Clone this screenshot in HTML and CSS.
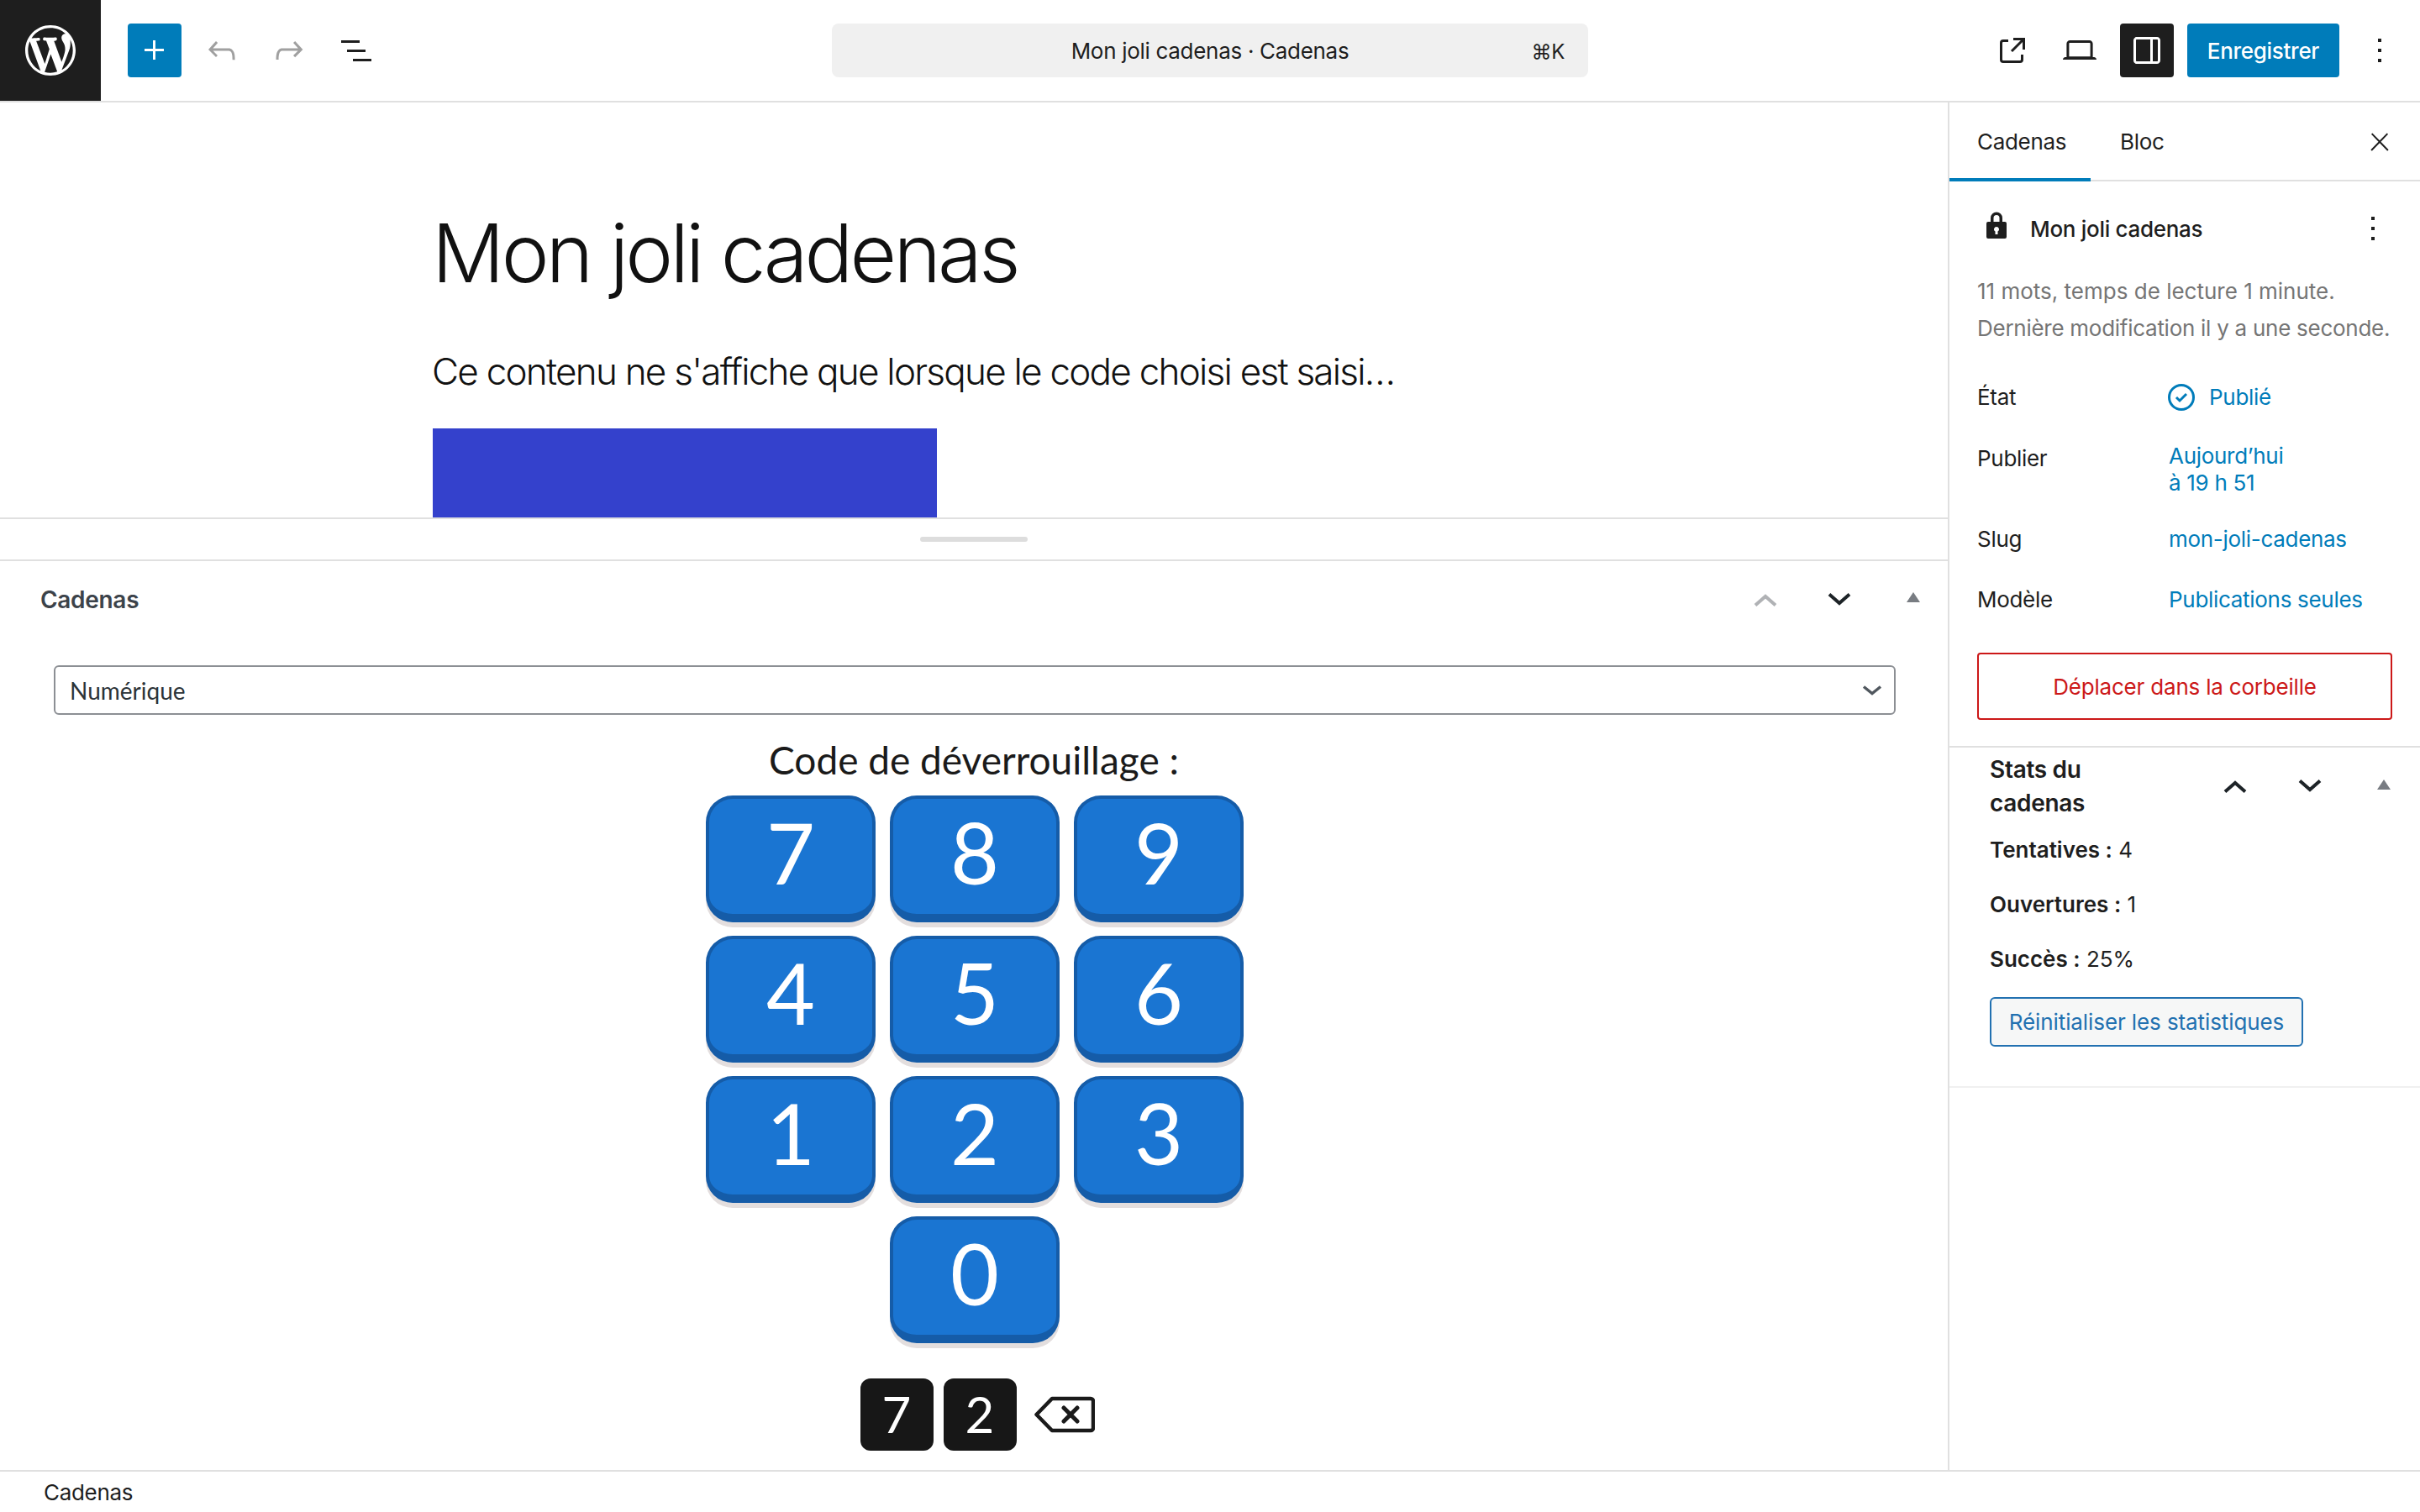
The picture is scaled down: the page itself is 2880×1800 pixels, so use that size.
FILE: index.html
```html
<!DOCTYPE html>
<html lang="fr">
<head>
<meta charset="utf-8">
<title>Mon joli cadenas</title>
<link rel="stylesheet" href="styles.css">
</head>
<body>
<div class="app">
  <header class="topbar">
    <div class="tb-left">
      <div class="logo"><svg width="60" height="60" viewBox="0 0 20 20" fill="#fff"><path d="M20 10c0-5.51-4.49-10-10-10C4.48 0 0 4.49 0 10c0 5.52 4.48 10 10 10 5.51 0 10-4.48 10-10zM7.78 15.37L4.37 6.22c.55-.02 1.17-.08 1.17-.08.5-.06.44-1.13-.06-1.11 0 0-1.45.11-2.37.11-.18 0-.37 0-.58-.01C4.12 2.69 6.87 1.11 10 1.11c2.33 0 4.45.87 6.05 2.34-.68-.11-1.65.39-1.65 1.58 0 .74.45 1.36.9 2.1.35.61.55 1.36.55 2.46 0 1.49-1.4 5-1.4 5l-3.03-8.37c.54-.02.82-.17.82-.17.5-.05.44-1.25-.06-1.22 0 0-1.44.12-2.38.12-.87 0-2.33-.12-2.33-.12-.5-.03-.56 1.2-.06 1.22l.92.08 1.26 3.41zM17.41 10c.24-.64.74-1.87.43-4.25.7 1.29 1.05 2.71 1.05 4.25 0 3.29-1.73 6.24-4.4 7.78.97-2.59 1.94-5.2 2.92-7.78zM6.1 18.09C3.12 16.65 1.11 13.53 1.11 10c0-1.3.23-2.48.72-3.59C3.25 10.3 4.67 14.2 6.1 18.09zm4.03-6.63l2.58 6.98c-.86.29-1.76.45-2.71.45-.79 0-1.57-.11-2.29-.33.81-2.38 1.62-4.74 2.42-7.1z"/></svg></div>
      <div class="btn-plus"><svg width="48" height="48" viewBox="0 0 24 24" fill="#fff"><path d="M11 12.5V17.5H12.5V12.5H17.5V11H12.5V6H11V11H6V12.5H11Z"/></svg></div>
      <svg class="ic-undo" width="48" height="48" viewBox="0 0 24 24" fill="#a0a0a0"><path d="M18.3 11.7c-.6-.6-1.4-.9-2.3-.9H6.7l2.9-3.3-1.1-1-4.5 5L8.5 16l1-1-2.7-2.7H16c.5 0 .9.2 1.3.5 1 1 1 3.4 1 4.5v.3h1.5v-.2c0-1.5 0-4.3-1.5-5.7z"/></svg>
      <svg class="ic-redo" width="48" height="48" viewBox="0 0 24 24" fill="#a0a0a0"><path d="M15.6 6.5l-1.1 1 2.9 3.3H8c-.9 0-1.7.3-2.3.9-1.4 1.5-1.4 4.2-1.4 5.6v.2h1.5v-.3c0-1.1 0-3.5 1-4.5.3-.3.7-.5 1.3-.5h9.2L14.5 15l1.1 1.1 4.6-4.6-4.6-5z"/></svg>
      <svg class="ic-list" width="48" height="48" viewBox="0 0 24 24" fill="#1e1e1e"><path d="M3 6h11v1.5H3V6Zm3.5 5.5h11V13h-11v-1.5ZM21 17H10v1.5h11V17Z"/></svg>
    </div>
    <div class="cmd">
      <span class="cmd-title">Mon joli cadenas · Cadenas</span>
      <span class="cmd-key">⌘K</span>
    </div>
    <div class="tb-right">
      <svg width="48" height="48" viewBox="0 0 24 24" fill="#1e1e1e"><path d="M19.5 4.5h-7V6h4.44l-5.97 5.97 1.06 1.06L18 7.06v4.44h1.5v-7Zm-13 1a2 2 0 0 0-2 2v10a2 2 0 0 0 2 2h10a2 2 0 0 0 2-2v-3H17v3a.5.5 0 0 1-.5.5h-10a.5.5 0 0 1-.5-.5v-10a.5.5 0 0 1 .5-.5h3V5.5h-3Z"/></svg>
      <svg class="ic-laptop" width="48" height="48" viewBox="0 0 24 24" fill="#1e1e1e"><path d="M20.5 16h-.7V8c0-1.1-.9-2-2-2H6.2c-1.1 0-2 .9-2 2v8h-.7c-.8 0-1.5.7-1.5 1.5h20c0-.8-.7-1.5-1.5-1.5zM5.7 8c0-.3.2-.5.5-.5h11.6c.3 0 .5.2.5.5v7.6H5.7V8z"/></svg>
      <div class="btn-drawer"><svg width="48" height="48" viewBox="0 0 24 24" fill="#fff"><path d="M18 4H6c-1.1 0-2 .9-2 2v12c0 1.1.9 2 2 2h12c1.1 0 2-.9 2-2V6c0-1.1-.9-2-2-2zm-4 14.5H6c-.3 0-.5-.2-.5-.5V6c0-.3.2-.5.5-.5h8v13zm4.5-.5c0 .3-.2.5-.5.5h-2.5v-13H18c.3 0 .5.2.5.5v12z"/></svg></div>
      <div class="btn-save">Enregistrer</div>
      <svg class="ic-more" width="48" height="48" viewBox="0 0 24 24" fill="#1e1e1e"><path d="M13 19h-2v-2h2v2zm0-6h-2v-2h2v2zm0-6h-2V5h2v2z"/></svg>
    </div>
  </header>

  <main class="body">
    <section class="left">
      <div class="canvas">
        <h1 class="post-title">Mon joli cadenas</h1>
        <p class="post-text">Ce contenu ne s'affiche que lorsque le code choisi est saisi…</p>
        <div class="post-block"></div>
      </div>
      <div class="resizer"><span class="pill"></span></div>
      <div class="metabox">
        <div class="mb-head">
          <h2 class="mb-title">Cadenas</h2>
          <svg class="ch" width="28" height="16" viewBox="0 0 28 16" fill="none" stroke="#b0b2b5" stroke-width="4"><path d="M2 14.5 14 4l12 10.5"/></svg>
          <svg class="ch ch-b" width="28" height="16" viewBox="0 0 28 16" fill="none" stroke="#1d2327" stroke-width="4"><path d="M2 1.5 14 12 26 1.5"/></svg>
          <svg class="tri" width="16" height="12" viewBox="0 0 16 12" fill="#787c82"><path d="M8 0l8 12H0z"/></svg>
        </div>
        <div class="select"><span>Numérique</span><svg width="24" height="14" viewBox="0 0 24 14" fill="none" stroke="#50575e" stroke-width="3.4"><path d="M2 2.5l10 8 10-8"/></svg></div>
        <div class="code-label">Code de déverrouillage :</div>
        <div class="keypad">
          <div class="key">7</div><div class="key">8</div><div class="key">9</div>
          <div class="key">4</div><div class="key">5</div><div class="key">6</div>
          <div class="key">1</div><div class="key">2</div><div class="key">3</div>
          <div class="key key-zero">0</div>
        </div>
        <div class="entered">
          <div class="tile">7</div><div class="tile">2</div>
          <svg class="bksp" width="72" height="44" viewBox="0 0 72 44" fill="none" stroke="#1a1a1a"><path stroke-width="4.5" stroke-linejoin="round" d="M2.5 22 21 3h46a3 3 0 0 1 3 3v32a3 3 0 0 1-3 3H21z"/><path stroke-width="5" stroke-linecap="round" d="M35 14l16 16M51 14 35 30"/></svg>
        </div>
      </div>
    </section>

    <aside class="side">
      <div class="tabs">
        <div class="tab tab-on">Cadenas</div>
        <div class="tab tab-2">Bloc</div>
        <svg class="ic-close" width="34" height="34" viewBox="0 0 24 24" fill="#1e1e1e"><path d="M13 11.8l6.1-6.3-1-1-6.1 6.2-6.1-6.2-1 1 6.1 6.3-6.5 6.7 1 1 6.5-6.6 6.5 6.6 1-1z"/></svg>
      </div>
      <div class="panel">
        <div class="doc">
          <svg class="ic-lock" width="24" height="32" viewBox="0 0 24 32" fill="#1e1e1e"><path fill-rule="evenodd" d="M5 12V7.5a7 7 0 0 1 14 0V12h3a2 2 0 0 1 2 2v16a2 2 0 0 1-2 2H2a2 2 0 0 1-2-2V14a2 2 0 0 1 2-2Zm3.5 0h7V7.5a3.5 3.5 0 0 0-7 0ZM12 18a3 3 0 0 0-1.5 5.6V27h3v-3.4A3 3 0 0 0 12 18Z"/></svg>
          <span class="doc-title">Mon joli cadenas</span>
          <svg class="ic-more2" width="48" height="48" viewBox="0 0 24 24" fill="#1e1e1e"><path d="M13 19h-2v-2h2v2zm0-6h-2v-2h2v2zm0-6h-2V5h2v2z"/></svg>
        </div>
        <p class="info">11 mots, temps de lecture 1 minute.</p>
        <p class="info info-2">Dernière modification il y a une seconde.</p>
        <div class="row row-state"><span class="lab">État</span><span class="val val-state"><svg width="32" height="32" viewBox="4 4 16 16" fill="#007cba"><path fill-rule="evenodd" d="M12 18.5a6.5 6.5 0 1 1 0-13 6.5 6.5 0 0 1 0 13ZM4 12a8 8 0 1 1 16 0 8 8 0 0 1-16 0Zm11.53-1.47-1.06-1.06L11 12.94l-1.47-1.47-1.06 1.06L11 15.06l4.53-4.53Z"/></svg>Publié</span></div>
        <div class="row row-pub"><span class="lab lab-pub">Publier</span><span class="val">Aujourd’hui<br>à 19 h 51</span></div>
        <div class="row row-slug"><span class="lab">Slug</span><span class="val">mon-joli-cadenas</span></div>
        <div class="row row-tpl"><span class="lab">Modèle</span><span class="val">Publications seules</span></div>
        <div class="trash">Déplacer dans la corbeille</div>
      </div>
      <div class="stats">
        <div class="stats-head">
          <h2 class="stats-title">Stats du cadenas</h2>
          <svg class="sc-a" width="28" height="16" viewBox="0 0 28 16" fill="none" stroke="#1d2327" stroke-width="4"><path d="M2 14.5 14 4l12 10.5"/></svg>
          <svg class="sc-b" width="28" height="16" viewBox="0 0 28 16" fill="none" stroke="#1d2327" stroke-width="4"><path d="M2 1.5 14 12 26 1.5"/></svg>
          <svg class="sc-c" width="16" height="12" viewBox="0 0 16 12" fill="#787c82"><path d="M8 0l8 12H0z"/></svg>
        </div>
        <p class="stat"><b>Tentatives :</b> 4</p>
        <p class="stat"><b>Ouvertures :</b> 1</p>
        <p class="stat"><b>Succès :</b> 25%</p>
        <div class="reset">Réinitialiser les statistiques</div>
      </div>
    </aside>
  </main>

  <footer class="foot">Cadenas</footer>
</div>
</body>
</html>
```

FILE: styles.css
```css
* { box-sizing: border-box; }
html, body { margin: 0; padding: 0; background: #fff; }
body { font-family: Inter, "Liberation Sans", sans-serif; font-size: 26px; letter-spacing: -0.3px; color: #1e1e1e; }
h1, h2, p { margin: 0; font-weight: inherit; }
svg { display: block; flex: none; }

.app { width: 2880px; height: 1800px; display: flex; flex-direction: column; overflow: hidden; }

/* top bar */
.topbar { height: 122px; flex: none; display: grid; grid-template-columns: 1fr 900px 1fr; align-items: center; border-bottom: 2px solid #e0e0e0; }
.tb-left { display: flex; align-items: center; height: 120px; }
.logo { width: 120px; height: 120px; background: #1e1e1e; display: flex; align-items: center; justify-content: center; margin-right: 32px; }
.btn-plus { width: 64px; height: 64px; border-radius: 4px; background: #007cba; display: flex; align-items: center; justify-content: center; margin-right: 24px; }
.ic-redo, .ic-list { margin-left: 32px; }
.cmd { height: 64px; background: #f0f0f0; border-radius: 8px; display: flex; align-items: center; justify-content: center; position: relative; }
.cmd-title { font-size: 26px; }
.cmd-key { position: absolute; right: 28px; top: 19px; font-size: 24px; }
.tb-right { display: flex; align-items: center; justify-content: flex-end; padding-right: 24px; }
.ic-laptop { margin-left: 32px; }
.btn-drawer { width: 64px; height: 64px; margin-left: 24px; border-radius: 4px; background: #1e1e1e; display: flex; align-items: center; justify-content: center; }
.btn-save { width: 181px; height: 64px; margin-left: 16px; border-radius: 4px; background: #007cba; color: #fff; display: flex; align-items: center; justify-content: center; font-weight: 500; }
.ic-more { margin-left: 24px; }

/* layout */
.body { flex: 1; min-height: 0; display: flex; }
.left { width: 2318px; flex: none; display: flex; flex-direction: column; }
.side { flex: 1; min-width: 0; border-left: 2px solid #e0e0e0; }

/* canvas */
.canvas { height: 496px; flex: none; padding: 113px 0 0 514px; border-bottom: 2px solid #e0e0e0; overflow: hidden; }
.post-title { font-size: 96px; line-height: 132px; font-weight: 300; letter-spacing: -3.8px; color: #111; }
.post-text { font-size: 44px; line-height: 66px; margin-top: 42px; font-weight: 300; letter-spacing: -1.75px; color: #111; }
.post-block { width: 600px; height: 120px; margin: 35px 0 0 1px; background: #3441cc; }
.resizer { height: 50px; flex: none; border-bottom: 2px solid #e0e0e0; display: flex; align-items: center; justify-content: center; }
.pill { width: 128px; height: 6px; border-radius: 3px; background: #ddd; }

/* meta box */
.metabox { flex: 1; min-height: 0; }
.mb-head { height: 92px; display: flex; align-items: center; padding: 0 33px 0 48px; }
.mb-title { font-size: 28px; font-weight: 600; color: #3c434a; margin-right: auto; }
.ch-b { margin-left: 60px; }
.tri { margin: 0 0 6px 66px; }
.select { margin: 32px 62px 0 64px; height: 59px; border: 2px solid #8c8f94; border-radius: 6px; display: flex; align-items: center; justify-content: space-between; padding: 0 14px 0 17px; font-family: Lato, sans-serif; letter-spacing: 0; font-size: 28px; color: #2c3338; }
.code-label { text-align: center; font-family: Lato, sans-serif; letter-spacing: 0; font-size: 46px; line-height: 60px; margin-top: 24px; color: #1a1a1a; }
.keypad { display: grid; grid-template-columns: repeat(3, 202px); gap: 16px 17px; justify-content: center; margin-top: 12px; padding-left: 2px; }
.key { height: 151px; background: #1a75d2; border: solid #155ca8; border-width: 4px 4px 10px; border-radius: 32px; box-shadow: 0 6px 0 #e3dede; color: #fff; font-family: Lato, sans-serif; letter-spacing: 0; font-size: 100px; line-height: 126px; text-align: center; }
.key-zero { grid-column: 2; }
.entered { display: flex; align-items: center; justify-content: center; gap: 12px; margin-top: 42px; padding-left: 8px; }
.tile { width: 87px; height: 86px; background: #171717; border-radius: 12px; color: #fff; font-family: Lato, sans-serif; letter-spacing: 0; font-size: 60px; line-height: 84px; text-align: center; }
.bksp { margin-left: 9px; }

/* sidebar */
.tabs { height: 94px; display: flex; align-items: stretch; border-bottom: 2px solid #e0e0e0; }
.tab { display: flex; align-items: center; margin-bottom: -2px; }
.tab-on { width: 168px; padding: 2px 0 0 33px; border-bottom: 4px solid #007cba; }
.tab-2 { margin-left: 35px; padding-bottom: 2px; }
.ic-close { margin: 30px 31px 0 auto; }
.panel { padding: 0 33px 31px; border-bottom: 2px solid #e0e0e0; }
.doc { display: flex; align-items: center; height: 48px; margin-top: 32px; }
.ic-lock { margin: -8px 0 0 11px; }
.doc-title { margin-left: 28px; font-weight: 500; }
.ic-more2 { margin-left: auto; margin-right: -1px; }
.info { line-height: 44px; color: #757575; letter-spacing: 0; white-space: nowrap; }
.doc + .info { margin-top: 29px; }
.info-2 { letter-spacing: -0.27px; }
.row { display: flex; line-height: 32px; }
.lab { width: 228px; flex: none; }
.val { color: #007cba; }
.val-state { display: flex; align-items: center; margin-left: -1px; }
.val-state svg { margin-right: 17px; }
.row-state { margin-top: 44px; }
.row-pub { margin-top: 38px; }
.lab-pub { padding-top: 3px; }
.row-slug { margin-top: 35px; }
.row-tpl { margin-top: 40px; }
.trash { margin-top: 47px; height: 80px; border: 2px solid #cc1818; border-radius: 4px; color: #cc1818; letter-spacing: -0.2px; display: flex; align-items: center; justify-content: center; }
.stats { height: 405px; padding-left: 48px; border-bottom: 2px solid #f0f0f0; }
.stats-head { display: flex; align-items: flex-start; }
.stats-title { width: 200px; font-size: 28px; font-weight: 600; line-height: 40px; margin-top: 6px; }
.sc-a { margin: 38px 0 0 78px; }
.sc-b { margin: 38px 0 0 61px; }
.sc-c { margin: 38px 0 0 66px; }
.stat { line-height: 32px; margin-bottom: 33px; letter-spacing: 0; }
.stat:first-of-type { margin-top: 20px; }
.stat b { font-weight: 600; }
.reset { width: 373px; height: 59px; margin-top: -4px; background: #f6f7f7; border: 2px solid #2271b1; border-radius: 6px; color: #2271b1; letter-spacing: -0.1px; display: flex; align-items: center; justify-content: center; }

/* footer */
.foot { height: 50px; flex: none; border-top: 2px solid #e0e0e0; padding-left: 52px; line-height: 50px; }
```
